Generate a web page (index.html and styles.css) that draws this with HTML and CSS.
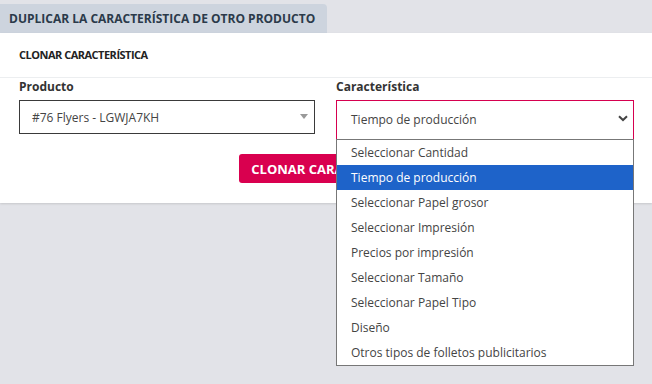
FILE: index.html
```html
<!DOCTYPE html>
<html lang="es">
<head>
    <meta charset="UTF-8">
    <title>Duplicar característica</title>
    <link rel="stylesheet" href="styles.css">
</head>
<body>
    <div class="tab">DUPLICAR LA CARACTERÍSTICA DE OTRO PRODUCTO</div>
    <div class="panel">
        <div class="panel-head">CLONAR CARACTERÍSTICA</div>
        <div class="panel-body">
            <div class="form-row">
                <div class="form-group">
                    <label>Producto</label>
                    <div class="select plain">
                        <span>#76 Flyers - LGWJA7KH</span>
                        <span class="caret"></span>
                    </div>
                </div>
                <div class="form-group">
                    <label>Característica</label>
                    <div class="select-wrap">
                        <div class="select active">
                            <span>Tiempo de producción</span>
                            <svg class="chevron" width="10" height="7" viewBox="0 0 10 7">
                                <path d="M1 1.2 L5 5 L9 1.2" fill="none" stroke="#444" stroke-width="2"/>
                            </svg>
                        </div>
                        <ul class="options">
                            <li>Seleccionar Cantidad</li>
                            <li class="selected">Tiempo de producción</li>
                            <li>Seleccionar Papel grosor</li>
                            <li>Seleccionar Impresión</li>
                            <li>Precios por impresión</li>
                            <li>Seleccionar Tamaño</li>
                            <li>Seleccionar Papel Tipo</li>
                            <li>Diseño</li>
                            <li>Otros tipos de folletos publicitarios</li>
                        </ul>
                    </div>
                </div>
            </div>
            <div class="actions">
                <button class="clone-btn">CLONAR CARACTERÍSTICA</button>
            </div>
        </div>
    </div>
</body>
</html>
```

FILE: styles.css
```css
html, body {
    min-height: 384px;
}
body {
    font-family: 'Open Sans', 'Liberation Sans', sans-serif;
    background-color: #e2e3e8;
    margin: 0;
    padding: 0;
    color: #333;
}
.tab {
    display: inline-block;
    margin-top: 4px;
    height: 29px;
    line-height: 29px;
    padding: 0 12px 0 9px;
    background-color: #cdd4de;
    border-radius: 0 4px 0 0;
    font-size: 12px;
    font-weight: 700;
    color: #2b3a4a;
}
.panel {
    position: relative;
    background-color: white;
    box-shadow: 0 1px 2px rgba(0, 0, 0, 0.12);
}
.panel-head {
    height: 44px;
    line-height: 44px;
    padding-left: 19px;
    font-size: 11px;
    font-weight: 700;
    letter-spacing: -0.5px;
    color: #222;
    border-bottom: 1px solid #eceef0;
}
.panel-body {
    padding: 0 18px 20px 19px;
}
.form-row {
    display: grid;
    grid-template-columns: 296px 1fr;
    column-gap: 21px;
}
.form-group label {
    display: block;
    font-size: 12px;
    font-weight: 700;
    color: #333;
    line-height: 18px;
    margin-bottom: 4px;
}
.select {
    display: flex;
    align-items: center;
    justify-content: space-between;
    box-sizing: border-box;
    font-size: 12px;
    color: #444;
}
.select.plain {
    height: 34px;
    padding: 0 6px 0 12px;
    border: 1px solid #3a3a3a;
}
.caret {
    width: 0;
    height: 0;
    border-left: 4px solid transparent;
    border-right: 4px solid transparent;
    border-top: 5px solid #999;
    margin-top: -2px;
}
.select-wrap {
    position: relative;
}
.select.active {
    height: 40px;
    padding: 0 5px 2px 14px;
    border: 1px solid #d6004f;
}
.chevron {
    margin-top: -2px;
}
.options {
    position: absolute;
    left: 0;
    right: 0;
    top: 39px;
    margin: 0;
    padding: 0;
    list-style: none;
    background-color: white;
    border: 1px solid #777;
    z-index: 2;
}
.options li {
    height: 25px;
    line-height: 25px;
    padding-left: 14px;
    font-size: 12px;
    color: #444;
}
.options li.selected {
    background-color: #1e63c9;
    color: white;
}
.actions {
    display: flex;
    justify-content: center;
    margin-top: 14px;
    padding-left: 14px;
}
.clone-btn {
    font-family: inherit;
    height: 29px;
    padding: 0 12px;
    background-color: #d9004f;
    color: white;
    border: none;
    border-radius: 3px;
    font-size: 13px;
    font-weight: 700;
}
```
